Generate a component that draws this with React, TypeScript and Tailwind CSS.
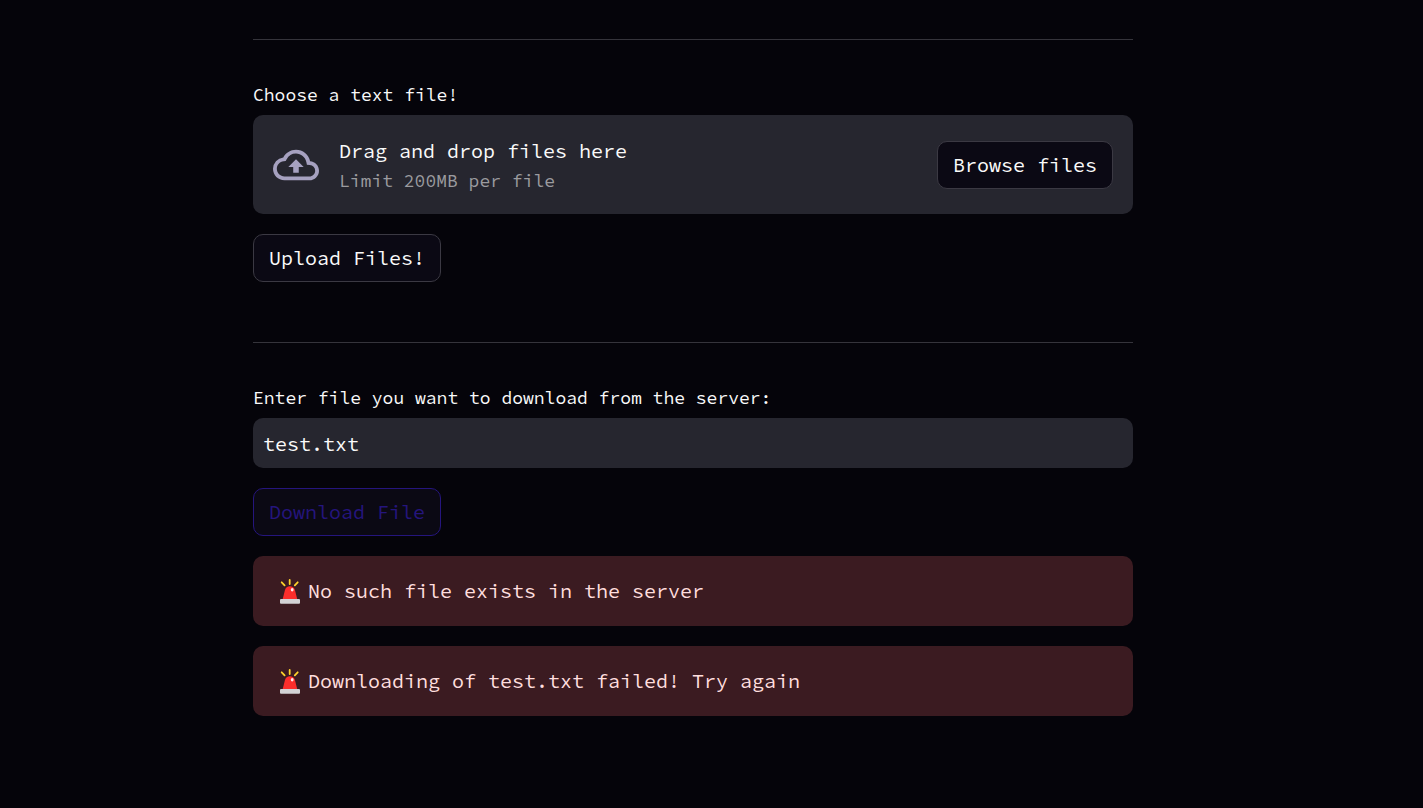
import { useState } from "react";

function CloudUploadIcon() {
  return (
    <svg viewBox="0 0 24 24" aria-hidden="true" className="size-[46px] shrink-0 fill-[#a6a1c0]">
      <path d="M19.35 10.04A7.49 7.49 0 0 0 12 4C9.11 4 6.6 5.64 5.35 8.04A5.994 5.994 0 0 0 0 14c0 3.31 2.69 6 6 6h13c2.76 0 5-2.24 5-5 0-2.64-2.05-4.78-4.65-4.96zM19 18H6c-2.21 0-4-1.79-4-4 0-2.05 1.53-3.76 3.56-3.97l1.07-.11.5-.95A5.469 5.469 0 0 1 12 6c2.62 0 4.88 1.86 5.39 4.43l.3 1.5 1.53.11A2.98 2.98 0 0 1 22 15c0 1.65-1.35 3-3 3zM8 13h2.55v3h2.9v-3H16l-4-4z" />
    </svg>
  );
}

function SirenIcon() {
  return (
    <svg viewBox="0 0 20 25" aria-hidden="true" className="h-[25px] w-5 shrink-0">
      <path d="M9.7 1v4M1.7 3.3l2.9 3M17.7 3.3l-2.9 3" stroke="#fdd32b" strokeWidth="1.8" strokeLinecap="round" fill="none" />
      <path d="M2.6 20.5 4.9 11.2C5.5 8.5 7.5 7.2 9.9 7.2s4.5 1.3 5.1 4l2.3 9.3z" fill="#fb2e2b" />
      <ellipse cx="12.2" cy="10.7" rx="1.4" ry="1.7" fill="#ffe9e9" />
      <rect x="0" y="20" width="20" height="4.8" rx="1" fill="#d2d2d4" />
    </svg>
  );
}

function Alert({ children }: { children: string }) {
  return (
    <div role="alert" className="flex h-[70px] items-center gap-2 rounded-[10px] bg-[#3b1b21] px-[27px] text-[#ffdede]">
      <SirenIcon />
      <p>{children}</p>
    </div>
  );
}

const button = "h-12 rounded-[10px] border bg-[#0b0914] px-[15px]";

export default function App() {
  const [name, setName] = useState("test.txt");
  return (
    <main className="min-h-screen bg-[#05040a] pr-[37px] pt-[39px] pb-20 font-['Source_Code_Pro','Liberation_Mono',monospace] text-xl leading-8 text-[#fafafa]">
      <div className="mx-auto flex max-w-[880px] flex-col">
        <hr className="border-[#35343b]" />

        <section className="flex flex-col items-start pt-10 pb-[60px]">
          <label htmlFor="browse" className="mb-[5px] text-lg leading-[30px]">Choose a text file!</label>
          <div className="mb-5 flex h-[99px] w-full items-center justify-between rounded-[10px] bg-[#26262f] px-5">
            <div className="flex items-center gap-5">
              <CloudUploadIcon />
              <div>
                <p>Drag and drop files here</p>
                <p className="text-lg leading-7 text-[#9b9b9f]">Limit 200MB per file</p>
              </div>
            </div>
            <button id="browse" type="button" className={`${button} border-[#3b3943]`}>Browse files</button>
          </div>
          <button type="button" className={`${button} border-[#3b3943]`}>Upload Files!</button>
        </section>

        <hr className="border-[#35343b]" />

        <section className="flex flex-col items-start pt-10">
          <label htmlFor="filename" className="mb-[5px] text-lg leading-[30px]">Enter file you want to download from the server:</label>
          <input
            id="filename"
            type="text"
            value={name}
            onChange={(e) => setName(e.target.value)}
            className="mb-5 h-[50px] w-full rounded-[10px] bg-[#26262f] px-[10px] outline-none"
          />
          <button type="button" className={`${button} mb-5 border-[#25157d] text-[#25157d]`}>Download File</button>
        </section>

        <div className="flex flex-col gap-5">
          <Alert>No such file exists in the server</Alert>
          <Alert>Downloading of test.txt failed! Try again</Alert>
        </div>
      </div>
    </main>
  );
}
